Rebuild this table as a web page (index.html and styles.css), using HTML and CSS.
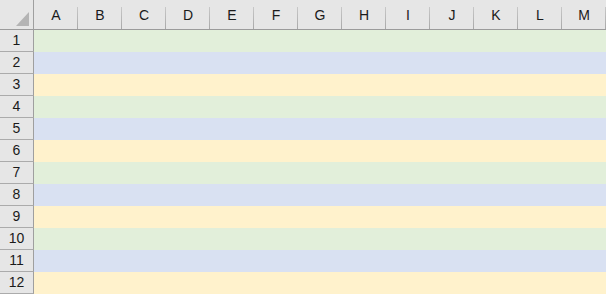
FILE: index.html
```html
<!DOCTYPE html>
<html>
<head>
<meta charset="utf-8">
<link rel="stylesheet" href="styles.css">
</head>
<body>
<div class="sheet">
  <div class="corner"><svg class="tri" width="14" height="15" viewBox="0 0 14 15"><polygon points="13,0 13,14 0,14" fill="#b4b4b4"/></svg></div>
  <div class="colhead">A</div><div class="colhead">B</div><div class="colhead">C</div><div class="colhead">D</div><div class="colhead">E</div><div class="colhead">F</div><div class="colhead">G</div><div class="colhead">H</div><div class="colhead">I</div><div class="colhead">J</div><div class="colhead">K</div><div class="colhead">L</div><div class="colhead">M</div>

  <div class="rowhead">1</div><div class="band green"></div>
  <div class="rowhead">2</div><div class="band blue"></div>
  <div class="rowhead">3</div><div class="band yellow"></div>
  <div class="rowhead">4</div><div class="band green"></div>
  <div class="rowhead">5</div><div class="band blue"></div>
  <div class="rowhead">6</div><div class="band yellow"></div>
  <div class="rowhead">7</div><div class="band green"></div>
  <div class="rowhead">8</div><div class="band blue"></div>
  <div class="rowhead">9</div><div class="band yellow"></div>
  <div class="rowhead">10</div><div class="band green"></div>
  <div class="rowhead">11</div><div class="band blue"></div>
  <div class="rowhead">12</div><div class="band yellow"></div>
</div>
</body>
</html>
```
FILE: styles.css
```css
html, body {
  margin: 0;
  padding: 0;
  background: #ffffff;
}
.sheet {
  display: grid;
  grid-template-columns: 34px repeat(13, 44px);
  grid-template-rows: 30px repeat(12, 22px);
  width: 606px;
  height: 294px;
  overflow: hidden;
  font-family: "Liberation Sans", Arial, sans-serif;
  font-size: 14px;
  color: #1a1a1a;
}
.corner {
  background: #e6e6e6;
  border-right: 1px solid #9f9f9f;
  border-bottom: 1px solid #9b9b9b;
  display: flex;
  align-items: flex-end;
  justify-content: flex-end;
  padding: 0 3px 2px 0;
}
.tri { display: block; }
.colhead {
  background: linear-gradient(#c8c8c8, #a8a8a8) right 7px / 1px 22px no-repeat, #e6e6e6;
  border-bottom: 1px solid #9b9b9b;
  display: flex;
  align-items: center;
  justify-content: center;
  padding-top: 1px;
}
.rowhead {
  grid-column: 1;
  background: #e6e6e6;
  border-right: 1px solid #9f9f9f;
  border-bottom: 1px solid #ababab;
  display: flex;
  align-items: center;
  justify-content: center;
  padding-bottom: 1px;
}
.band { grid-column: 2 / span 13; }
.green { background: #e2efda; }
.blue { background: #d9e1f2; }
.yellow { background: #fff2cc; }
```
